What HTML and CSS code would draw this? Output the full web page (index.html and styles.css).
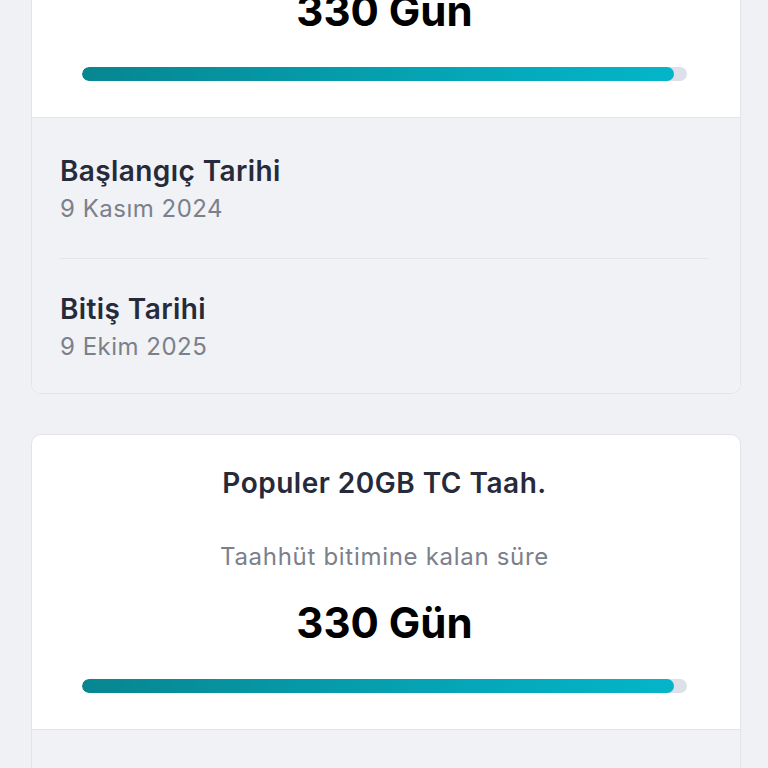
FILE: index.html
```html
<!DOCTYPE html>
<html lang="tr">
<head>
    <meta charset="UTF-8">
    <meta name="viewport" content="width=device-width, initial-scale=1.0">
    <title>Taahhüt Bilgileri</title>
    <link rel="stylesheet" href="styles.css">
</head>
<body>

<div class="page">
    <div class="card">
        <div class="card-top">
            <div class="plan-name">Populer 20GB TC Taah.</div>
            <div class="plan-label">Taahhüt bitimine kalan süre</div>
            <div class="plan-days">330 Gün</div>
            <div class="progress">
                <div class="progress-fill" style="width: 97.8%;"></div>
            </div>
        </div>
        <div class="card-dates">
            <div class="date-row">
                <div class="date-title">Başlangıç Tarihi</div>
                <div class="date-value">9 Kasım 2024</div>
            </div>
            <div class="date-row">
                <div class="date-title">Bitiş Tarihi</div>
                <div class="date-value">9 Ekim 2025</div>
            </div>
        </div>
    </div>

    <div class="card">
        <div class="card-top">
            <div class="plan-name">Populer 20GB TC Taah.</div>
            <div class="plan-label">Taahhüt bitimine kalan süre</div>
            <div class="plan-days">330 Gün</div>
            <div class="progress">
                <div class="progress-fill" style="width: 97.8%;"></div>
            </div>
        </div>
        <div class="card-dates">
            <div class="date-row">
                <div class="date-title">Başlangıç Tarihi</div>
                <div class="date-value">9 Kasım 2024</div>
            </div>
            <div class="date-row">
                <div class="date-title">Bitiş Tarihi</div>
                <div class="date-value">9 Ekim 2025</div>
            </div>
        </div>
    </div>
</div>

</body>
</html>
```

FILE: styles.css
```css
body {
    font-family: Inter, "Noto Sans", sans-serif;
    background-color: #eff1f5;
    margin: 0;
    padding: 0;
}
.page {
    margin-top: -178px;
    padding: 0 27px 0 31px;
}
.card {
    background-color: #fff;
    border: 1px solid #e2e4e9;
    border-radius: 10px;
    overflow: hidden;
    margin-bottom: 40px;
}
.card-top {
    text-align: center;
    padding: 30px 53px 36px 50px;
}
.plan-name {
    font-size: 28px;
    line-height: 36px;
    font-weight: 600;
    letter-spacing: 0.5px;
    color: #262a3b;
}
.plan-label {
    margin-top: 40px;
    font-size: 24px;
    line-height: 32px;
    letter-spacing: 0.7px;
    color: #7b808b;
}
.plan-days {
    margin-top: 24px;
    font-size: 42px;
    line-height: 52px;
    font-weight: 700;
    color: #000;
}
.progress {
    margin-top: 30px;
    height: 14px;
    border-radius: 7px;
    background-color: #dde0e9;
    overflow: hidden;
}
.progress-fill {
    height: 100%;
    border-radius: 7px;
    background: linear-gradient(90deg, #078690, #05a2b2 55%, #04b5c9);
}
.card-dates {
    background-color: #f0f2f6;
    border-top: 1px solid #e2e4e9;
}
.date-row {
    padding: 35px 0 33px;
    margin: 0 32px 0 28px;
    border-bottom: 1px solid #e3e5ea;
}
.date-row:last-child {
    padding: 32px 0 30px;
    border-bottom: none;
}
.date-title {
    font-size: 28px;
    line-height: 36px;
    font-weight: 600;
    letter-spacing: 0.4px;
    color: #262a3b;
}
.date-value {
    margin-top: 4px;
    font-size: 24px;
    line-height: 32px;
    letter-spacing: 0.5px;
    color: #7b808b;
}
```
